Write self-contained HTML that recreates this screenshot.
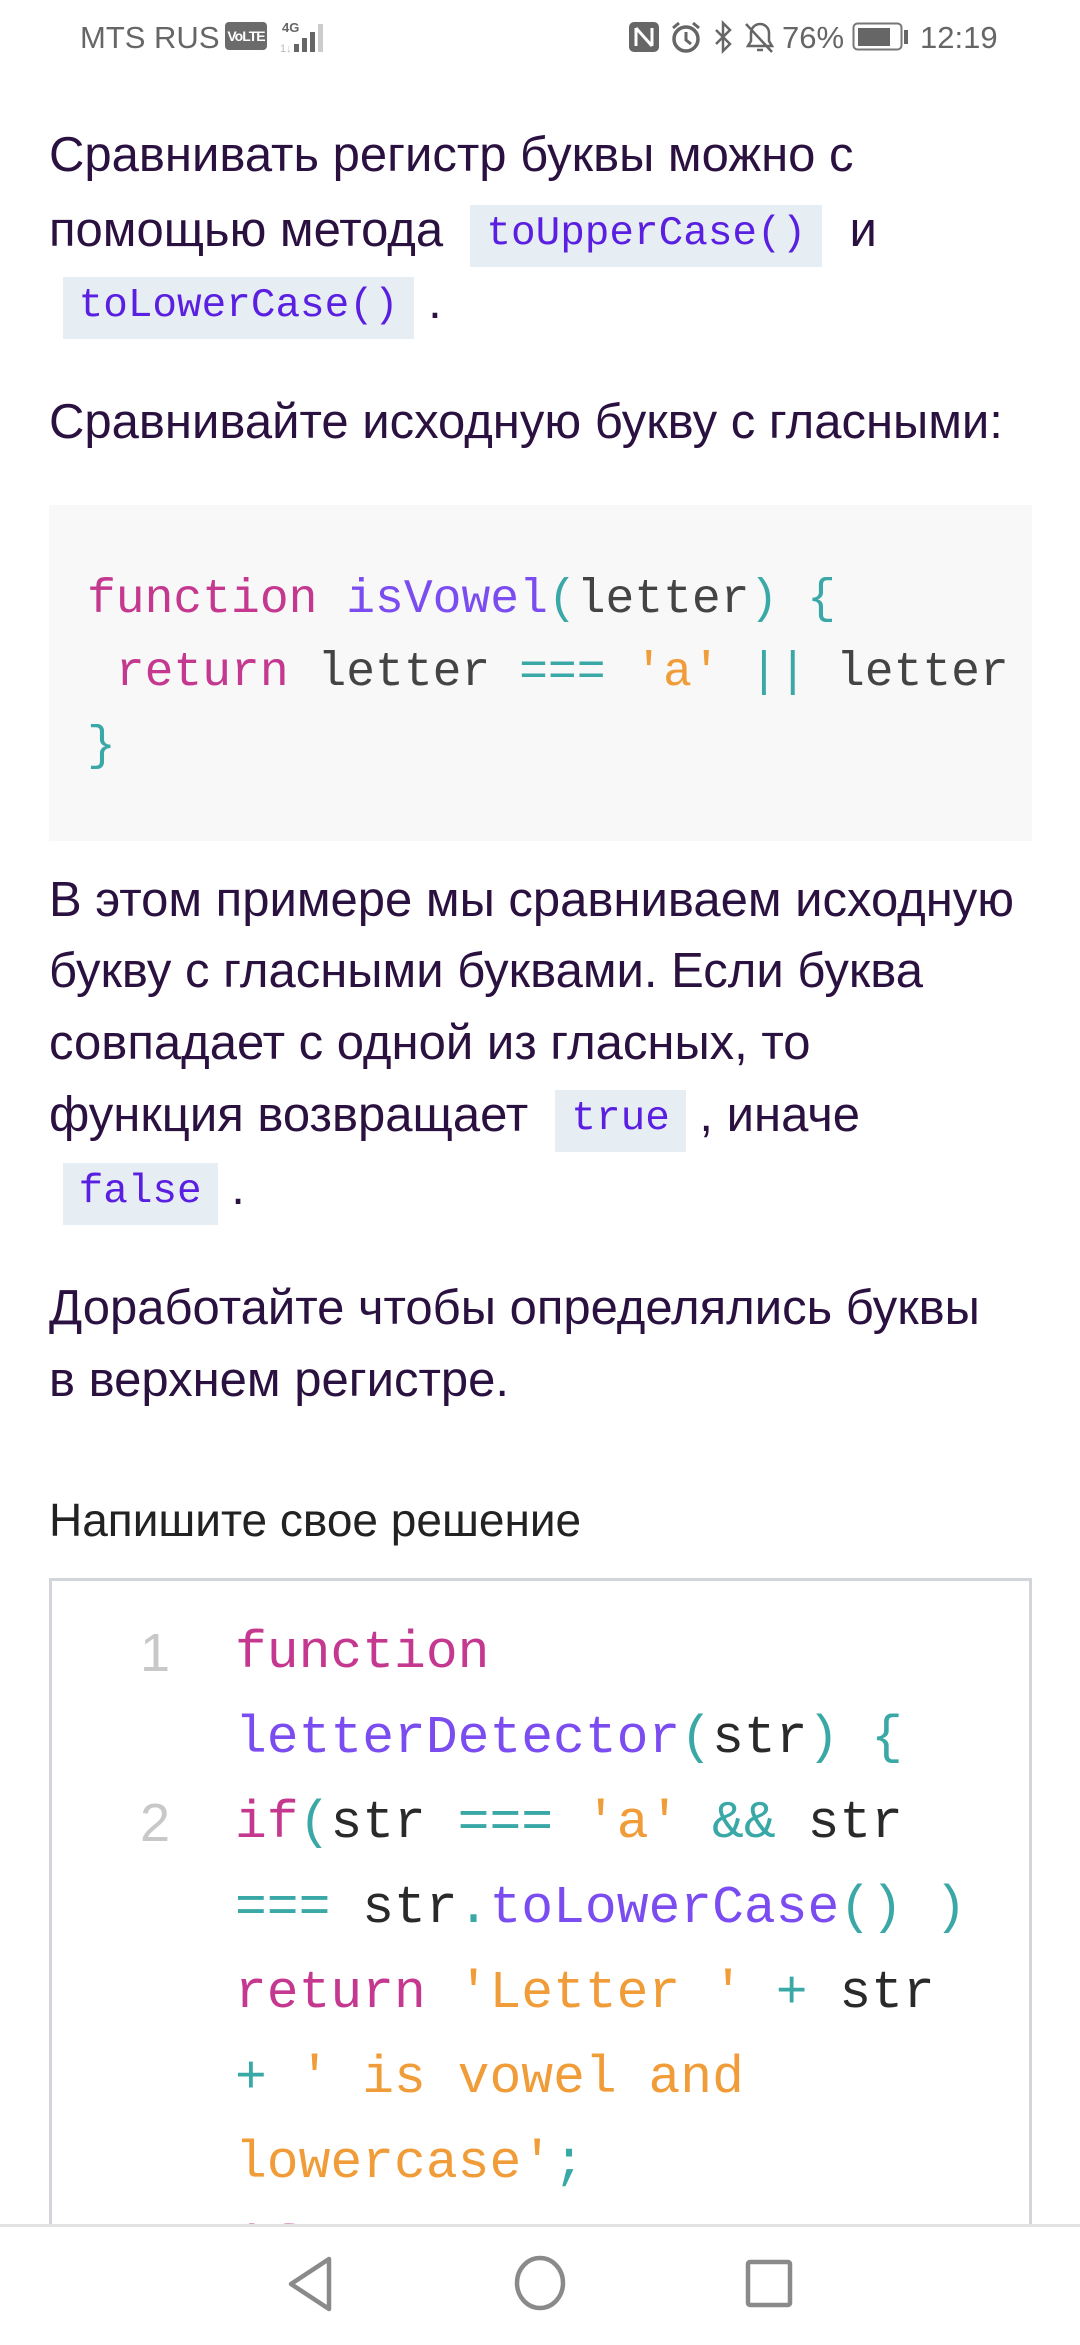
<!DOCTYPE html>
<html><head><meta charset="utf-8">
<style>
*{margin:0;padding:0;box-sizing:border-box}
body{width:1080px;height:2340px;background:#fff;position:relative;overflow:hidden;font-family:"Liberation Sans",sans-serif}
.st{position:absolute;top:18px;font-size:31px;color:#666;line-height:40px}
.t{position:absolute;left:49px;white-space:nowrap;font-size:49px;color:#2b1140;line-height:60px}
.c{font-family:"Liberation Mono",monospace;font-size:41px;color:#5a1fe0;background:#e6eef4;padding:6px 16px 10px;vertical-align:2px}
.cb{position:absolute;left:49px;top:505px;width:983px;height:336px;background:#f8f8f8;overflow:hidden}
.cl{position:absolute;left:38px;white-space:pre;font-family:"Liberation Mono",monospace;font-size:48px;line-height:60px;color:#444}
.k{color:#c4388f}.f{color:#7b4df0}.p{color:#3aa8a6}.s{color:#f09c38}
.ed{position:absolute;left:49px;top:1578px;width:983px;height:700px;border:3px solid #d2d6da;overflow:hidden}
.el{position:absolute;left:183px;white-space:pre;font-family:"Liberation Mono",monospace;font-size:53px;line-height:70px;color:#2a2a2a}
.ln{position:absolute;left:88px;font-family:"Liberation Sans",sans-serif;font-size:54px;color:#c8c8c8;line-height:70px}
.nav{position:absolute;left:0;top:2224px;width:1080px;height:116px;background:#fff;border-top:3px solid #e2e2e2;z-index:5}
</style></head><body>
<div class="st" style="left:80px">MTS RUS</div>
<div style="position:absolute;left:225px;top:22px;width:42px;height:28px;background:#6b6b6b;border-radius:4px;color:#fff;font-size:14px;font-weight:bold;line-height:28px;text-align:center;letter-spacing:-1px">VoLTE</div>
<div style="position:absolute;left:282px;top:20px;font-size:13px;color:#666;font-weight:bold">4G</div>
<svg style="position:absolute;left:280px;top:20px" width="52" height="34"><rect x="14" y="24" width="5" height="8" fill="#666"/><rect x="22" y="18" width="5" height="14" fill="#666"/><rect x="30" y="12" width="5" height="20" fill="#666"/><rect x="38" y="4" width="5" height="28" fill="#ccc"/><text x="0" y="32" font-size="11" fill="#bbb">1↓</text></svg>
<svg style="position:absolute;left:626px;top:20px" width="290" height="36">
<rect x="3" y="2" width="30" height="30" rx="5" fill="#666"/><path d="M10 8v18M10 8l16 18M26 8v18" stroke="#fff" stroke-width="3" fill="none"/>
<circle cx="60" cy="19" r="12" stroke="#666" stroke-width="3.5" fill="none"/><path d="M60 12v8l5 4M47 8l6-5M73 8l-6-5" stroke="#666" stroke-width="3" fill="none"/>
<path d="M90 10l14 14-7 7V3l7 7-14 14" stroke="#666" stroke-width="2.5" fill="none"/>
<path d="M122 26h24l-3-5v-8a9 9 0 0 0-18 0v8zM131 30h6M120 4l26 28" stroke="#666" stroke-width="2.5" fill="none"/>
</svg>
<div class="st" style="left:782px">76%</div>
<svg style="position:absolute;left:852px;top:22px" width="58" height="30"><rect x="1.5" y="1.5" width="48" height="26" rx="4" stroke="#777" stroke-width="2" fill="none"/><rect x="6" y="6" width="32" height="18" fill="#666"/><rect x="52" y="8" width="4" height="14" fill="#666"/></svg>
<div class="st" style="left:920px">12:19</div>

<div class="t" style="top:125px">Сравнивать регистр буквы можно с</div>
<div class="t" style="top:200px">помощью метода&nbsp; <span class="c">toUpperCase()</span> &nbsp;и</div>
<div class="t" style="top:272px">&nbsp;<span class="c">toLowerCase()</span> .</div>
<div class="t" style="top:392px">Сравнивайте исходную букву с гласными:</div>

<div class="cb">
<div class="cl" style="top:65px"><span class="k">function</span> <span class="f">isVowel</span><span class="p">(</span>letter<span class="p">)</span> <span class="p">{</span></div>
<div class="cl" style="top:138px"> <span class="k">return</span> letter <span class="p">===</span> <span class="s">'a'</span> <span class="p">||</span> letter <span class="p">===</span></div>
<div class="cl" style="top:212px"><span class="p">}</span></div>
</div>

<div class="t" style="top:870px">В этом примере мы сравниваем исходную</div>
<div class="t" style="top:941px">букву с гласными буквами. Если буква</div>
<div class="t" style="top:1013px">совпадает с одной из гласных, то</div>
<div class="t" style="top:1085px">функция возвращает&nbsp; <span class="c">true</span> , иначе</div>
<div class="t" style="top:1158px">&nbsp;<span class="c">false</span> .</div>
<div class="t" style="top:1278px">Доработайте чтобы определялись буквы</div>
<div class="t" style="top:1350px">в верхнем регистре.</div>
<div class="t" style="top:1490px;font-size:46px;color:#222">Напишите свое решение</div>

<div class="ed">
<div class="ln" style="top:37px">1</div>
<div class="el" style="top:37px"><span class="k">function</span></div>
<div class="el" style="top:122px"><span class="f">letterDetector</span><span class="p">(</span>str<span class="p">)</span> <span class="p">{</span></div>
<div class="ln" style="top:207px">2</div>
<div class="el" style="top:207px"><span class="k">if</span><span class="p">(</span>str <span class="p">===</span> <span class="s">'a'</span> <span class="p">&amp;&amp;</span> str</div>
<div class="el" style="top:292px"><span class="p">===</span> str<span class="p">.</span><span class="f">toLowerCase</span><span class="p">()</span> <span class="p">)</span></div>
<div class="el" style="top:377px"><span class="k">return</span> <span class="s">'Letter '</span> <span class="p">+</span> str</div>
<div class="el" style="top:462px"><span class="p">+</span> <span class="s">' is vowel and</span></div>
<div class="el" style="top:547px"><span class="s">lowercase'</span><span class="p">;</span></div>
<div class="el" style="top:632px"><span class="k">if</span></div>
</div>

<div class="nav">
<svg width="1080" height="113">
<path d="M329 32v50l-38-25z" stroke="#8a8a8a" stroke-width="4.5" fill="none" stroke-linejoin="round"/>
<ellipse cx="540" cy="56" rx="23" ry="25" stroke="#8a8a8a" stroke-width="4.5" fill="none"/>
<rect x="748" y="35" width="42" height="43" rx="2" stroke="#8a8a8a" stroke-width="4.5" fill="none"/>
</svg>
</div>
</body></html>
